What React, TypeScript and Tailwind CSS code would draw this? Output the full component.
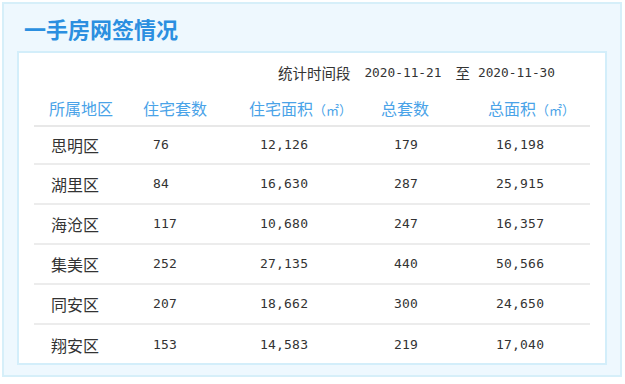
import React from 'react'

const rows = [
  ['思明区', '76', '12,126', '179', '16,198'],
  ['湖里区', '84', '16,630', '287', '25,915'],
  ['海沧区', '117', '10,680', '247', '16,357'],
  ['集美区', '252', '27,135', '440', '50,566'],
  ['同安区', '207', '18,662', '300', '24,650'],
  ['翔安区', '153', '14,583', '219', '17,040'],
]

const cjk = "font-['Noto_Sans_CJK_SC',sans-serif]"
const num = "font-['DejaVu_Sans_Mono',monospace] text-[13px] tracking-[0.2px]"
const statNum = "font-['DejaVu_Sans_Mono',monospace] text-[12.8px]"

const App: React.FC = () => {
  return (
    <div className="w-[625px] h-[384px] bg-white pt-[2px] pl-[2px]">
      <div className="w-[620px] h-[375px] border-2 border-[#d6eff9] bg-[#eef8fe]">
        {/* Title */}
        <div className={`pl-[20px] pt-[9px] h-[47px] text-[22px] leading-[30px] font-bold text-[#2b8fe0] ${cjk}`}>
          一手房网签情况
        </div>

        {/* Panel */}
        <div className="ml-[13px] w-[590px] h-[314px] border-2 border-[#d3eefa] bg-white pt-[10px] px-[15px]">
          <div className={`h-[20px] flex items-center justify-end pr-[35px] text-[14.5px] text-[#333] ${cjk}`}>
            <span>统计时间段</span>
            <span className={`ml-[14px] ${statNum}`}>2020-11-21</span>
            <span className="ml-[14px]">至</span>
            <span className={`ml-[8px] ${statNum}`}>2020-11-30</span>
          </div>

          <div className={`mt-[8px] h-[36px] flex items-center border-b-2 border-[#e8e8e8] text-[16px] text-[#4aa3e8] ${cjk}`}>
            <div className="w-[109px] pl-[15px]">所属地区</div>
            <div className="w-[106px]">住宅套数</div>
            <div className="w-[132px]">住宅面积<span className="text-[13px]">（㎡）</span></div>
            <div className="w-[107px]">总套数</div>
            <div className="flex-1">总面积<span className="text-[13px]">（㎡）</span></div>
          </div>

          {rows.map((r, i) => (
            <div
              key={r[0]}
              className={`${i === 0 ? 'h-[38px]' : 'h-[40px]'} flex items-center text-[#333] ${i < rows.length - 1 ? 'border-b-2 border-[#ececec]' : ''}`}
            >
              <div className={`w-[109px] pl-[17px] text-[16px] ${cjk}`}>{r[0]}</div>
              <div className={`w-[106px] pl-[10px] ${num}`}>{r[1]}</div>
              <div className={`w-[132px] pl-[11px] ${num}`}>{r[2]}</div>
              <div className={`w-[107px] pl-[13px] ${num}`}>{r[3]}</div>
              <div className={`flex-1 pl-[8px] ${num}`}>{r[4]}</div>
            </div>
          ))}
        </div>
      </div>
    </div>
  )
}

export default App
